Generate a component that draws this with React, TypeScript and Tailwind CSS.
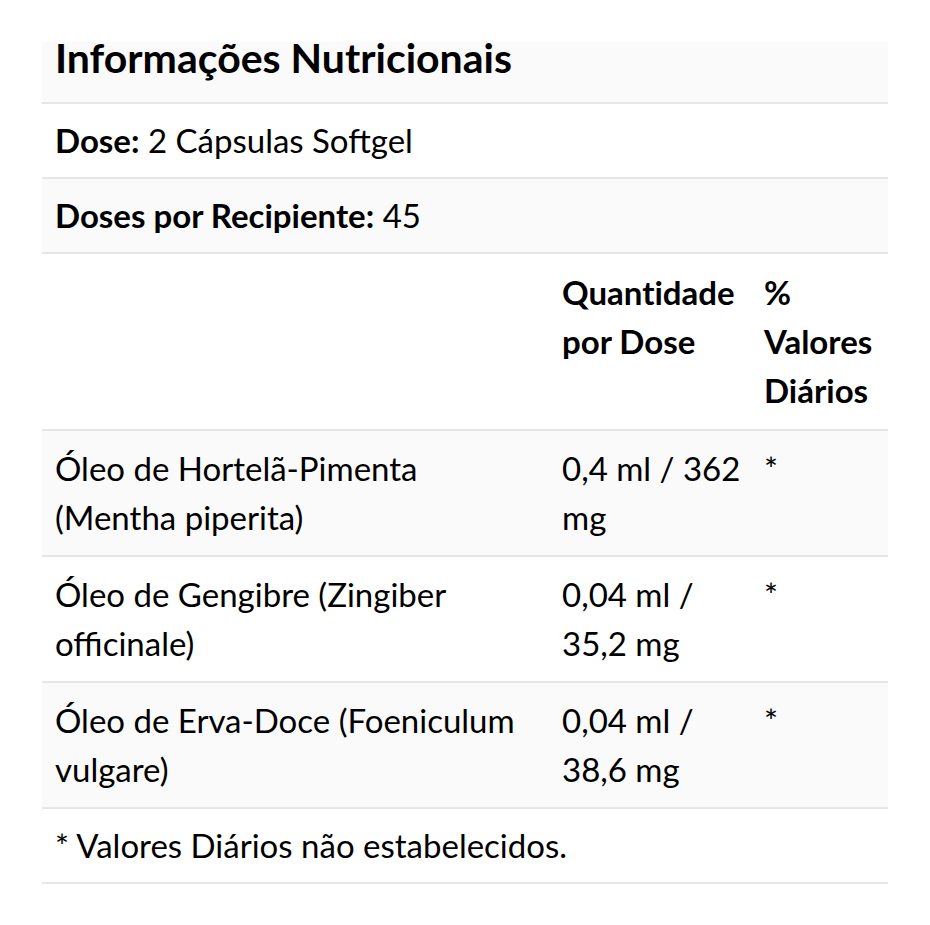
import React from "react";

const rows = [
  { name: "Óleo de Hortelã-Pimenta (Mentha piperita)", qty: "0,4 ml / 362 mg", dv: "*" },
  { name: "Óleo de Gengibre (Zingiber officinale)", qty: "0,04 ml / 35,2 mg", dv: "*" },
  { name: "Óleo de Erva-Doce (Foeniculum vulgare)", qty: "0,04 ml / 38,6 mg", dv: "*" },
];

export default function App() {
  return (
    <div className="w-[930px] h-[925px] bg-white pt-[42px] px-[42px] text-black" style={{ fontFamily: "Lato, 'Noto Sans', sans-serif" }}>
      <table className="w-[846px] table-fixed border-collapse text-[33px] leading-[49px]">
        <colgroup>
          <col className="w-[507px]" />
          <col className="w-[202px]" />
          <col className="w-[137px]" />
        </colgroup>
        <tbody>
          <tr className="bg-[#fafafa] border-b-2 border-[#e6e6e6]">
            <td colSpan={3} className="pl-[13px] pr-[6px] pt-0 pb-[28px] text-[41px] font-bold leading-[32px] align-top">
              Informações Nutricionais
            </td>
          </tr>
          <tr className="border-b-2 border-[#e6e6e6]">
            <td colSpan={3} className="pl-[13px] pr-[6px] py-[12px]">
              <span className="font-bold">Dose:</span> 2 Cápsulas Softgel
            </td>
          </tr>
          <tr className="bg-[#fafafa] border-b-2 border-[#e6e6e6]">
            <td colSpan={3} className="pl-[13px] pr-[6px] py-[12px]">
              <span className="font-bold">Doses por Recipiente:</span> 45
            </td>
          </tr>
          <tr className="border-b-2 border-[#e6e6e6] font-bold align-top">
            <td className="pl-[13px] pr-[6px] py-[14px]"></td>
            <td className="pl-[13px] pr-[6px] py-[14px] [font-variant-ligatures:none]">Quantidade por Dose</td>
            <td className="pl-[13px] pr-[6px] py-[14px]">% Valores Diários</td>
          </tr>
          {rows.map((r, i) => (
            <tr key={i} className={`border-b-2 border-[#e6e6e6] align-top ${i % 2 === 0 ? "bg-[#fafafa]" : "bg-white"}`}>
              <td className="pl-[13px] pr-[6px] pt-[13px] pb-[13px]">{r.name}</td>
              <td className="pl-[13px] pr-[6px] pt-[13px] pb-[13px]">{r.qty}</td>
              <td className="pl-[13px] pr-[6px] pt-[13px] pb-[13px]">{r.dv}</td>
            </tr>
          ))}
          <tr className="border-b-2 border-[#e6e6e6]">
            <td colSpan={3} className="pl-[13px] pr-[6px] py-[12px]">* Valores Diários não estabelecidos.</td>
          </tr>
        </tbody>
      </table>
    </div>
  );
}
